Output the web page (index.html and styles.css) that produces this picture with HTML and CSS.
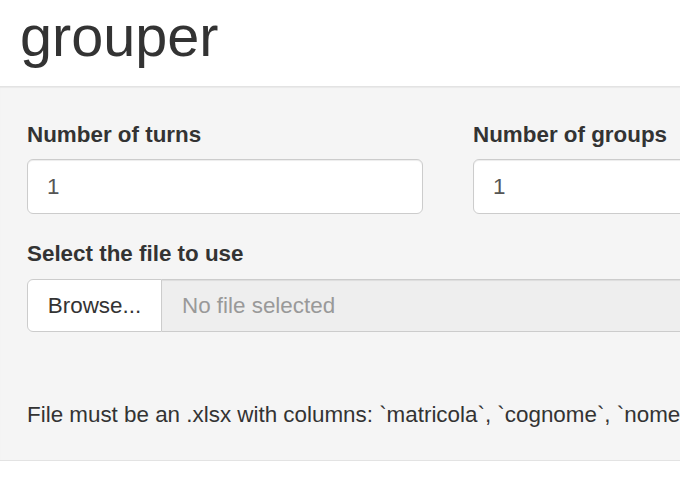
FILE: index.html
```html
<!DOCTYPE html>
<html>
<head>
<meta charset="utf-8">
<title>grouper</title>
<link rel="stylesheet" href="styles.css">
</head>
<body>
<div class="page">
  <h1 class="title">grouper</h1>
  <div class="well">
    <div class="row">
      <div class="form-group">
        <label class="control-label" for="turns">Number of turns</label>
        <input class="form-control" id="turns" type="text" value="1">
      </div>
      <div class="form-group">
        <label class="control-label" for="groups">Number of groups</label>
        <input class="form-control" id="groups" type="text" value="1">
      </div>
    </div>
    <div class="form-group file-group">
      <label class="control-label file-label">Select the file to use</label>
      <div class="input-group">
        <label class="btn-file">Browse...<input type="file" class="hidden-file"></label>
        <input class="form-control file-name" type="text" placeholder="No file selected" readonly>
      </div>
    </div>
    <div class="note">File must be an .xlsx with columns: `matricola`, `cognome`, `nome`</div>
  </div>
</div>
</body>
</html>
```

FILE: styles.css
```css
html, body {
  margin: 0;
  padding: 0;
  overflow: hidden;
  background: #ffffff;
}

body {
  font-family: "Liberation Sans", Arial, Helvetica, sans-serif;
  font-size: 22.4px;
  line-height: 1.42857;
  color: #333333;
}

.page {
  width: 1200px;
}

.title {
  font-family: "Liberation Sans", Arial, Helvetica, sans-serif;
  font-size: 57.6px;
  font-weight: 500;
  line-height: 1.1;
  margin: 0 0 18px 0;
  padding: 5px 0 0 20px;
  color: #333333;
}

.well {
  background: #f5f5f5;
  border-top: 1px solid #e3e3e3;
  border-bottom: 1px solid #e3e3e3;
  box-shadow: inset 0 1px 1px rgba(0, 0, 0, 0.05);
  padding: 32px 0 29px 27px;
}

.row {
  display: grid;
  grid-template-columns: 396px 396px;
  column-gap: 50px;
}

.form-group {
  margin-bottom: 24px;
}

.control-label {
  display: block;
  font-weight: 700;
  line-height: 32px;
  margin-bottom: 8px;
}

.file-label {
  margin-bottom: 9px;
}

.form-control {
  display: block;
  box-sizing: border-box;
  width: 100%;
  height: 55px;
  margin: 0;
  padding: 0 19px;
  font-family: "Liberation Sans", Arial, Helvetica, sans-serif;
  font-size: 22.4px;
  color: #555555;
  background: #ffffff;
  border: 1px solid #cccccc;
  border-radius: 6px;
  box-shadow: inset 0 1px 1px rgba(0, 0, 0, 0.075);
  outline: none;
}

.file-group {
  margin-bottom: 67px;
}

.input-group {
  display: flex;
  width: 900px;
  height: 53px;
}

.btn-file {
  box-sizing: border-box;
  display: flex;
  align-items: center;
  justify-content: center;
  width: 135px;
  height: 53px;
  flex: none;
  background: #ffffff;
  border: 1px solid #cccccc;
  border-radius: 6px 0 0 6px;
  color: #333333;
  font-weight: 400;
}

.hidden-file {
  display: none;
}

.file-name {
  flex: 1;
  height: 53px;
  background: #eeeeee;
  border-left: 0;
  border-radius: 0 6px 6px 0;
  padding-left: 20px;
  color: #555555;
}

.file-name::placeholder {
  color: #999999;
  opacity: 1;
}

.note {
  line-height: 32px;
}
```
